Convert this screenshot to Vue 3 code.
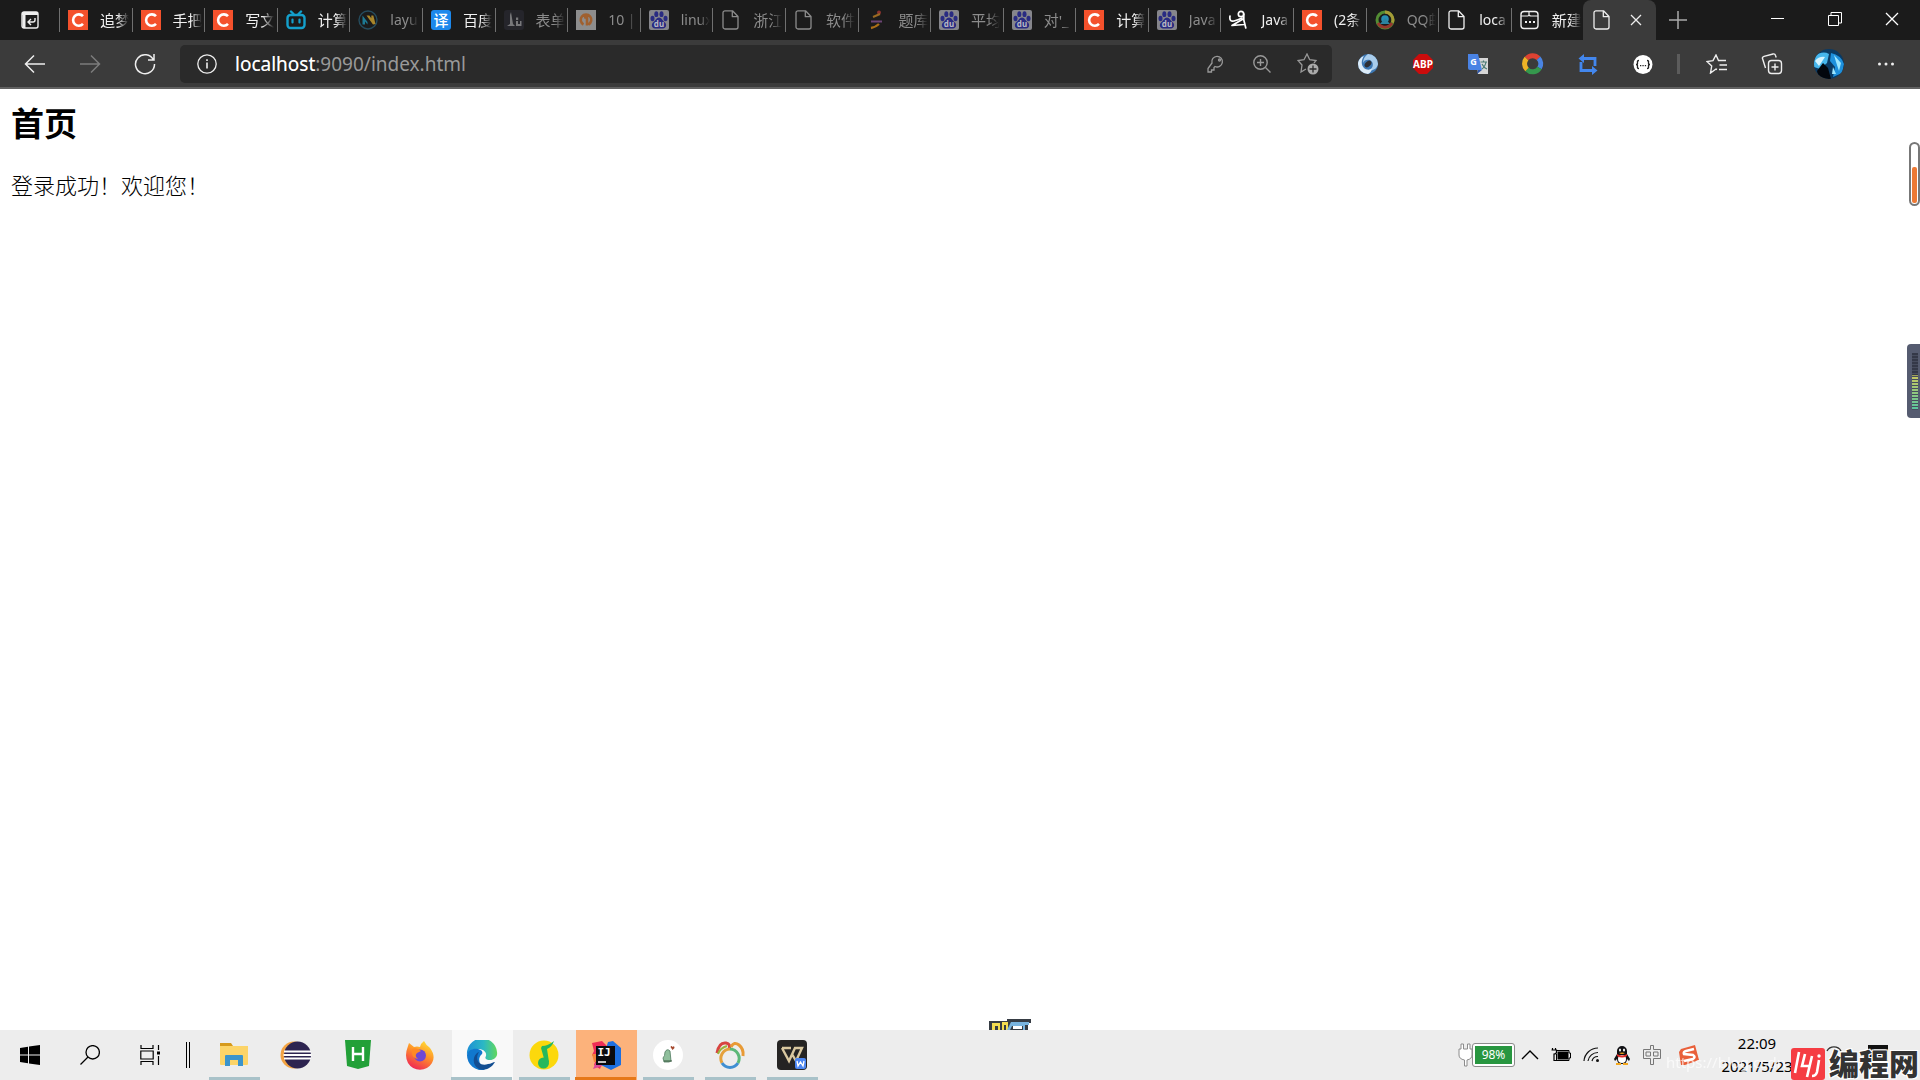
<script setup>
import { ref } from 'vue'

const art = {
  csdn: '<rect width="20" height="20" fill="#f4512c"/><path d="M15 6.2A5.7 5.7 0 1 0 15 13.9" fill="none" stroke="#fff" stroke-width="2.6"/>',
  bili: '<g fill="none" stroke="#14a0cc" stroke-width="2.4" stroke-linecap="round"><rect x="1.5" y="5" width="17" height="13" rx="3"/><path d="M5 1.5 7.5 4M15 1.5 12.5 4"/></g><path d="M6.5 9.500v3M13.500 9.500v3" stroke="#14a0cc" stroke-width="2.200" stroke-linecap="round"/>',
  layui: '<circle cx="10" cy="10" r="9" fill="none" stroke="#254c5e" stroke-width="1.400"/><path d="M4.500 14.500v-9l5 6.500v2.500L7 11.500v3z" fill="#1d7a94"/><path d="M8.500 5.500h2.800l2 2.800V5.500h2l2.200 8.500-2.500.500z" fill="#a8862a"/>',
  yi: '<rect width="20" height="20" rx="3" fill="#1c88ec"/><text x="10" y="15.500" text-anchor="middle" font-size="15" fill="#fff" font-weight="500" font-family="Noto Sans CJK SC, sans-serif">译</text>',
  li: '<rect width="20" height="20" rx="3" fill="#25252b"/><path d="M3 16l3-2V5l1-3 2 12 2 2zM12 7.500h2.200V10H12zM12 11h2v3h2v-3h1.500v5H12z" fill="#77777a"/>',
  ten: '<rect width="20" height="20" fill="#8d8d8d"/><path d="M7.500 14.500A5.300 5.300 0 1 1 12.500 14.500M8 7.500l3-1v9" fill="none" stroke="#a0602f" stroke-width="2.600"/>',
  baidu: '<rect width="20" height="20" rx="2" fill="#86868c"/><g fill="#292b82"><ellipse cx="3.500" cy="8.500" rx="2" ry="2.800"/><ellipse cx="7.300" cy="4.200" rx="2" ry="2.900"/><ellipse cx="12.500" cy="4.200" rx="2" ry="2.900"/><ellipse cx="16.500" cy="8.500" rx="2" ry="2.800"/><path d="M10 7.500c2.500 0 3.500 3 5.500 4.500 3 2.500 1.500 6.500-1.500 6.500H6c-3 0-4.500-4-1.500-6.500C6.500 10.500 7.500 7.500 10 7.500z"/></g><text x="10" y="17" text-anchor="middle" font-size="8" font-weight="700" fill="#b8b8c4" font-family="Noto Sans, sans-serif">du</text>',
  page: '<path d="M4 .800h7.500L17 6.500V17a2 2 0 0 1-2 2H4a2 2 0 0 1-2-2V2.800a2 2 0 0 1 2-2zM11.300 1v5.700H17" fill="none" stroke="currentColor" stroke-width="1.300" stroke-linejoin="round"/>',
  newpage: '<rect x="1" y="1.500" width="17" height="17" rx="3" fill="none" stroke="currentColor" stroke-width="1.400"/><path d="M1 6h7l1.500-2M9 1.500V4q0 2 2 2h7" fill="none" stroke="currentColor" stroke-width="1.200"/><path d="M5 11h2v2H5zM9 11h2v2H9zM13 11h2v2h-2z" fill="currentColor"/>',
  tiku: '<circle cx="12" cy="2.500" r="2" fill="#8b332f"/><path d="M6 7l7-3" stroke="#9b6a22" stroke-width="2"/><path d="M4 11.500h11" stroke="#6c4575" stroke-width="2"/><path d="M4 18q5-1 8-4" fill="none" stroke="#ab6e16" stroke-width="2.400"/>',
  niu: '<g fill="none" stroke="#fff" stroke-width="1.700" stroke-linecap="round" stroke-linejoin="round"><path d="M1 6q-1 6 4 5 4-1 8-3"/><circle cx="12" cy="4" r="2.700"/><path d="M14.800 4v6l2 8M14 9 3 15.500l12-1"/></g>',
  qqmail: '<circle cx="10" cy="10" r="8" fill="none" stroke="#538d34" stroke-width="3"/><path d="M10 2a8 8 0 0 1 7.500 10.500" fill="none" stroke="#a59b36" stroke-width="3"/><path d="M17 13a8 8 0 0 1-14 0" fill="none" stroke="#96382d" stroke-width="3"/><circle cx="10" cy="9" r="3.800" fill="#278eb1"/><path d="M5 14l5-6 5 6z" fill="#2d83a0"/>'
}

const tabs = [
  { t: '追梦', i: 'csdn', on: 1 }, { t: '手把', i: 'csdn', on: 1 }, { t: '写文', i: 'csdn', on: 1 },
  { t: '计算', i: 'bili', on: 1 }, { t: 'layu', i: 'layui', latin: 1 }, { t: '百度', i: 'yi', on: 1 },
  { t: '表单', i: 'li' }, { t: '10 |', i: 'ten', latin: 1 }, { t: 'linux', i: 'baidu', latin: 1 }, { t: '浙江', i: 'page' },
  { t: '软件', i: 'page' }, { t: '题库', i: 'tiku' }, { t: '平均', i: 'baidu' }, { t: "对'_", i: 'baidu' },
  { t: '计算', i: 'csdn', on: 1 }, { t: 'Java', i: 'baidu', latin: 1 }, { t: 'Java', i: 'niu', on: 1, latin: 1 },
  { t: '(2条', i: 'csdn', on: 1, latin: 1 }, { t: 'QQ邮', i: 'qqmail', latin: 1 }, { t: 'loca', i: 'page', on: 1, latin: 1 },
  { t: '新建', i: 'newpage', on: 1 }
]

const extensions = [
  { n: 'Swirl', s: '<circle cx="12" cy="12" r="10" fill="#3d78b4"/><path d="M12 2a10 10 0 0 1 10 10c-1 5-5 7-9 6 5-2 5-8 1-10-3-1-6 0-7 3 0-4 2-7 5-9z" fill="#a9cdec"/><path d="M12 22A10 10 0 0 1 2 12c0-4 3-7 6-8-3 4-3 9 0 12 2 2 5 2 8 1-1 3-2 4-4 5z" fill="#dcecf9"/><ellipse cx="12" cy="12" rx="4" ry="2.600" transform="rotate(-45 12 12)" fill="#2d2f35"/>' },
  { n: 'ABP', s: '<path d="M8 2h8l6 6v8l-6 6H8l-6-6V8z" fill="#cc0c0c"/><text x="12" y="16" text-anchor="middle" font-size="10" font-weight="700" fill="#fff" font-family="Noto Sans, sans-serif">ABP</text>' },
  { n: 'Translate', s: '<path d="M10 6h12v16H12z" fill="#d6d6d6"/><path d="M2 2h10l4 16H4a2 2 0 0 1-2-2z" fill="#4a83e4"/><path d="M12 18l-1 4 5-4z" fill="#2d55a8"/><text x="7.500" y="13" text-anchor="middle" font-size="9" font-weight="700" fill="#fff" font-family="Noto Sans, sans-serif">G</text><path d="M14.500 10H21M17.500 8.500V10M20 10q-1 5-4 7M16 12q2 4 5 5" fill="none" stroke="#4a7a73" stroke-width="1.200"/>' },
  { n: 'Ring', s: '<g fill="none" stroke-width="5"><path d="M5.500 6.500A8 8 0 0 1 17.500 6.200" stroke="#dc4232"/><path d="M17.500 6.200A8 8 0 0 1 18.500 16" stroke="#4a84e2"/><path d="M18.500 16A8 8 0 0 1 6 17.500" stroke="#35984d"/><path d="M6 17.500A8 8 0 0 1 5.500 6.500" stroke="#edb326"/></g>' },
  { n: 'Loop', s: '<path d="M19 14V6.500H7M5 10v8.500h12" fill="none" stroke="#4387ee" stroke-width="2.800"/><path d="M8 2v9L2.500 6.500zM16 14v9l5.500-4.500z" fill="#4387ee"/>' },
  { n: 'JSON', s: '<circle cx="12" cy="12.500" r="9.500" fill="#fff"/><path d="M8 8.500q-2 0-1.500 2 .300 2-1.500 2 1.800 0 1.500 2-.500 2 1.500 2M16 8.500q2 0 1.500 2-.300 2 1.500 2-1.800 0-1.500 2 .500 2-1.500 2" fill="none" stroke="#222" stroke-width="1.300"/><path d="M9 13h1.300v1.300H9zM11.400 13h1.300v1.300h-1.300zM13.800 13h1.300v1.300h-1.300z" fill="#222"/>' }
]

const apps = [
  { n: 'Explorer', run: 1, s: '<path d="M2 3h11l2 3H2z" fill="#d69a1c"/><path d="M2 6h28v18a1 1 0 0 1-1 1H3a1 1 0 0 1-1-1z" fill="#fcd468"/><path d="M7 26V16a1 1 0 0 1 1-1h16a1 1 0 0 1 1 1v10h-5v-6h-8v6z" fill="#3b94cc"/>' },
  { n: 'Eclipse', s: '<circle cx="14" cy="15" r="13.500" fill="#f2a343"/><circle cx="17.500" cy="15" r="13.500" fill="#2d2450"/><path d="M4 11.500h27M3.500 15h28M4 18.500h27" stroke="#fff" stroke-width="1.800"/>' },
  { n: 'HBuilder', s: '<path d="M3 0h26l-2 26-11 3-11-3z" fill="#22a038"/><path d="M11 7v14M21 7v14M11 14h10" stroke="#fff" stroke-width="2.400"/>' },
  { n: 'Firefox', s: '<defs><linearGradient id="ff" x1=".800" y1="0" x2=".300" y2="1"><stop offset="0" stop-color="#ffe338"/><stop offset=".450" stop-color="#ff9328"/><stop offset="1" stop-color="#ef2457"/></linearGradient></defs><path d="M4 6l1-3 5 4q3-1 6 0 1-4 4-6 2 4 5 6l1 1q6 8 2 15a14 14 0 0 1-24 0Q0 16 4 6z" fill="url(#ff)"/><circle cx="16" cy="15.500" r="6" fill="#7048d4"/><path d="M8 9q5-2 9 2l-4 2q-3 3 1 6-6-1-6-6z" fill="#ff8a25"/>' },
  { n: 'Edge', run: 1, active: 1, s: '<defs><linearGradient id="eg" x1="0" x2="1"><stop offset="0" stop-color="#1d8fd6"/><stop offset=".550" stop-color="#2bb8c4"/><stop offset="1" stop-color="#62d85c"/></linearGradient></defs><path d="M1 15A15 15 0 0 1 31 12c1 5-3 8-7 8-3 0-6-1-4-4 1-5-4-7-8-7-6 0-10 3-11 6z" fill="url(#eg)"/><path d="M1 15c1-5 6-7 11-6 4 1 5 3 4 5-5 4-3 11 3 16A15 15 0 0 1 1 15z" fill="#1178ce"/><path d="M13 12c-5 8 1 15 9 12 3 0 5-2 7-2-4 7-11 9-16 7-8-4-6-15 0-17z" fill="#124d91"/>' },
  { n: 'QQ Music', run: 1, s: '<circle cx="16" cy="15" r="14.500" fill="#fcd80c"/><path d="M14 6q6 0 12-5-2 6-7 8l2 13h-4L13 8z" fill="#27b85d"/><circle cx="15.500" cy="23" r="5.500" fill="#27b85d"/>' },
  { n: 'IntelliJ IDEA', run: 1, alert: 1, s: '<path d="M2 3l10-2 6 6-8 22-6-4 2-6-4-4 2-4z" fill="#ee2d57"/><path d="M2 14h7v8H4z" fill="#f5823a"/><path d="M18 2l5-1 8 7v17l-10 5-10-5z" fill="#1d6fe0"/><path d="M3 29l3-7h6v4z" fill="#dc4a9b"/><path d="M6 6h19v19H6z" fill="#0b0b0e"/><path d="M8 22h8" stroke="#fff" stroke-width="1.500"/><text x="14" y="16" text-anchor="middle" font-size="11" font-weight="700" fill="#fff" font-family="DejaVu Sans Mono, monospace">IJ</text>' },
  { n: 'Pet', run: 1, s: '<circle cx="16" cy="15" r="15" fill="#fff"/><path d="M13 12q2-4 5-1l1 10-2 1h-5l-1-4q2-2 2-6z" fill="#8fbf9c" stroke="#4f7a5e" stroke-width=".800"/><path d="M12 21h8" stroke="#39563f"/><path d="M20.500 10l-2-3q1-2 2 0 2-2 2 1z" fill="#a5482d"/>' },
  { n: 'Navicat', run: 1, s: '<g fill="none" stroke-width="3"><path d="M3 13Q5 2 12 3q5 1 3 6" stroke="#d84440"/><path d="M17 7q3-6 8-2 5 4 4 11" stroke="#e89a35"/><path d="M16 9A9.500 9.500 0 0 0 8 23" stroke="#e5a13c"/><path d="M8 23a9.500 9.500 0 0 0 16 0" stroke="#408fd2"/><path d="M16 9a9.500 9.500 0 0 1 8 14" stroke="#5cb878"/><path d="M4 14q2-6 9-8" stroke="#9bb43c" stroke-width="2"/></g>' },
  { n: 'WPS', run: 1, s: '<rect x="1" width="30" height="30" rx="4" fill="#252423"/><path d="M6 8h9M6 8l7 13 6-13h7l-6 13-4-7" fill="none" stroke="#d9c8a0" stroke-width="2.400"/><rect x="19" y="18" width="11" height="11" rx="2" fill="#4b86f2"/><path d="M21 21l1 5 2.500-4 2.500 4 1-5" fill="none" stroke="#fff" stroke-width="1.300"/>' }
]

const address = ref('localhost:9090/index.html')
</script>

<template>
  <div class="screen">
    <header>
      <div class="strip">
        <button class="tabmenu" aria-label="Tab actions">
          <svg width="18" height="18" viewBox="0 0 18 18" fill="none" stroke="#eee" stroke-width="1.400"><rect x="1" y="1" width="16" height="16" rx="2" /><path d="M1 2.500h16" stroke-width="3" /><path d="M3 3v14" stroke-width="3" /><path d="M14 7v2q0 2-2 2H7.500M10 8l-3 3 3 3" /></svg>
        </button>
        <nav class="tabs">
          <button v-for="(tab, k) in tabs" :key="k" class="tab" :class="{ awake: tab.on }">
            <svg class="favicon" width="20" height="20" viewBox="0 0 20 20" v-html="art[tab.i]"></svg>
            <span class="title" :class="{ latin: tab.latin }">{{ tab.t }}</span>
          </button>
          <div class="tab current">
            <svg class="favicon" width="20" height="20" viewBox="0 0 20 20" v-html="art.page"></svg>
            <button class="close" aria-label="Close tab"><svg width="12" height="12" viewBox="0 0 12 12"><path d="M1 1l10 10M11 1 1 11" stroke="#eee" stroke-width="1.300" /></svg></button>
          </div>
        </nav>
        <button class="add" aria-label="New tab"><svg width="18" height="18" viewBox="0 0 18 18"><path d="M9 0v18M0 9h18" stroke="#aaa" stroke-width="1.500" /></svg></button>
        <div class="window">
          <button aria-label="Minimize"><svg width="14" height="14" viewBox="0 0 14 14"><path d="M0 6.500h13" stroke="#fff" /></svg></button>
          <button aria-label="Restore"><svg width="14" height="14" viewBox="0 0 14 14" fill="none" stroke="#fff"><path d="M.500 3.500h10v10H.500zM3 3V.500h10.500V11H11" /></svg></button>
          <button aria-label="Close"><svg width="14" height="14" viewBox="0 0 14 14"><path d="M1 1l12 12M13 1 1 13" stroke="#fff" stroke-width="1.300" /></svg></button>
        </div>
      </div>

      <div class="toolbar">
        <div class="history">
          <button aria-label="Back"><svg width="22" height="20" viewBox="0 0 22 20" fill="none" stroke="#eee" stroke-width="1.500"><path d="M21 10H2M10 1.500 1.500 10l8.500 8.500" /></svg></button>
          <button aria-label="Forward"><svg width="22" height="20" viewBox="0 0 22 20" fill="none" stroke="#7c7c7c" stroke-width="1.500"><path d="M1 10h19M12 1.500l8.500 8.500-8.500 8.500" /></svg></button>
          <button aria-label="Reload"><svg width="22" height="22" viewBox="0 0 22 22" fill="none" stroke="#eee" stroke-width="1.500"><path d="M19.500 7A9.500 9.500 0 1 0 20.500 11M20 1v6h-6" /></svg></button>
        </div>
        <div class="address">
          <svg width="20" height="20" viewBox="0 0 20 20" fill="none" stroke="#eee" stroke-width="1.300"><circle cx="10" cy="10" r="9.200" /><path d="M10 8.500V14.500M10 5.300v1.700" stroke-width="1.600" /></svg>
          <div class="url">
            <input v-model="address" type="text" aria-label="Address" />
            <span class="host" aria-hidden="true">localhost</span>
          </div>
          <button aria-label="Passwords"><svg width="18" height="18" viewBox="0 0 18 18" fill="none" stroke="#999" stroke-width="1.300"><path d="M8 11.500a5.300 5.300 0 1 0-3-3.500L1 13.500V17h3.500v-2H7v-2.500z" /><circle cx="12.500" cy="5" r="1" /></svg></button>
          <button aria-label="Zoom"><svg width="18" height="18" viewBox="0 0 18 18" fill="none" stroke="#999" stroke-width="1.400"><circle cx="7.500" cy="7.500" r="6.700" /><path d="M12.500 12.500l5 5M7.500 4v7M4 7.500h7" /></svg></button>
          <button aria-label="Add favourite"><svg width="22" height="22" viewBox="0 0 22 22" fill="none" stroke="#999" stroke-width="1.300"><path d="M9 16l-5 3 1-7-4-4.500 6-.800L10 1l2.700 5.700 6.300.800-2 2.500" /><circle cx="16" cy="16" r="5.500" fill="#aaa" stroke="none" /><path d="M16 12.500v7M12.500 16h7" stroke="#2b2b2b" /></svg></button>
        </div>
        <div class="tools">
          <button v-for="e in extensions" :key="e.n" :aria-label="e.n"><svg width="24" height="24" viewBox="0 0 24 24" v-html="e.s"></svg></button>
          <i class="divider"></i>
          <button aria-label="Favourites"><svg width="22" height="20" viewBox="0 0 22 20" fill="none" stroke="#eee" stroke-width="1.400"><path d="M11 15.500l-1-.500-5.500 4 1.200-7L1 7.500l6-.800L10 1l2.500 5.500H20M13.500 11H21M13 15.500h8" /></svg></button>
          <button aria-label="Collections"><svg width="22" height="22" viewBox="0 0 22 22" fill="none" stroke="#eee" stroke-width="1.400"><path d="M4.500 15 1.500 5.500Q1 4 3 3.300L12 1q2-.500 2.500 1.500l.700 2" /><rect x="7.500" y="7.500" width="13" height="13" rx="3" /><path d="M14 10.500v7M10.500 14h7" /></svg></button>
          <button class="profile" aria-label="Profile"><svg width="30" height="30" viewBox="0 0 30 30"><defs><clipPath id="av"><circle cx="15" cy="15" r="15" /></clipPath></defs><g clip-path="url(#av)"><path d="M0 0h30v30H0z" fill="#0b3a63" /><path d="M0 8q8-7 15-3l-2 9-7 6-6-2z" fill="#46b6ec" /><path d="M1 12q4-5 10-4l-6 9z" fill="#d4f3ff" /><path d="M17 4q10 2 13 11l-2 9-9 4 2-10-5-6z" fill="#1e90dc" /><path d="M20 6l7 8-2 8-3-9zM18 25l1-7 3 7z" fill="#9be6ff" /><path d="M3 22l6-8 5 5 3 11H5z" fill="#02060d" /></g></svg></button>
          <button aria-label="More"><svg width="18" height="4" viewBox="0 0 18 4" fill="#eee"><circle cx="2.500" cy="2" r="1.500" /><circle cx="9" cy="2" r="1.500" /><circle cx="15.500" cy="2" r="1.500" /></svg></button>
        </div>
      </div>
    </header>

    <main>
      <h2>首页</h2>
      <p>登录成功！欢迎您！</p>
      <div class="gauge"><i></i></div>
      <div class="meter"><i></i></div>
      <svg class="pet" width="44" height="11" viewBox="0 0 44 11"><path d="M1 11V2h18V0h24v4h-3v7z" fill="#363c44" /><path d="M4 11V4h8v7h-2V7H7v4zM14 11V3h6v8h-2V6h-2v5z" fill="#f3dc50" /><path d="M23 3h18v3h-4v5h-2V7H24l-2 4h-3z" fill="#79b4df" /><path d="M25 7h9v3h-9z" fill="#fff" /></svg>
    </main>

    <footer>
      <div class="start">
        <button aria-label="Start"><svg width="20" height="20" viewBox="0 0 20 20"><path d="M0 3l8-1.200V9.500H0zM9 1.600 20 0v9.500H9zM0 10.500h8v7.700L0 17zM9 10.500h11V20L9 18.400z" /></svg></button>
        <button aria-label="Search"><svg width="20" height="20" viewBox="0 0 20 20" fill="none" stroke="#000" stroke-width="1.300"><circle cx="12.700" cy="7.300" r="6.700" /><path d="M8 12 .500 19.500" /></svg></button>
        <button aria-label="Task view"><svg width="20" height="20" viewBox="0 0 20 20" fill="none" stroke="#000" stroke-width="1.200"><path d="M1 0v3.500h12V0M1 20v-3.500h12V20M.800 6h12.400v8H.800zM18.500 0v5M18.500 11v9" /><path d="M17 6.500h3v3h-3z" fill="#000" stroke="none" /></svg></button>
        <i class="bars"></i>
      </div>
      <div class="apps">
        <button v-for="a in apps" :key="a.n" :aria-label="a.n" :class="{ run: a.run, active: a.active, alert: a.alert }"><svg width="32" height="30" viewBox="0 0 32 30" v-html="a.s"></svg></button>
      </div>
      <div class="tray">
        <div class="power">
          <svg width="15" height="24" viewBox="0 0 15 24" fill="#fff" stroke="#8c8c8c"><path d="M3 6V1h2.500v5h4V1H12v5h2v6q0 4-5 5v6H6.500v-6Q1 16 1 12V6z" /></svg>
          <span>98%</span>
        </div>
        <svg width="18" height="10" viewBox="0 0 18 10" fill="none" stroke="#000" stroke-width="1.400"><path d="M1 9l8-8 8 8" /></svg>
        <svg width="20" height="14" viewBox="0 0 20 14"><path d="M1.500 0v2M4.500 0v2M.500 2h5v2q0 2-2.500 2v6.500h3" fill="none" stroke="#000" stroke-width="1.200" /><path d="M6.500 3.500h11v8h-11z" fill="#000" /><path d="M6 2.500h12V5h1.500v5H18v2.500H5.500V6" fill="none" stroke="#000" /></svg>
        <svg width="18" height="16" viewBox="0 0 18 16" fill="none" stroke="#111" stroke-width="1.200"><path d="M1 14A14 14 0 0 1 15 1M5 14A10 10 0 0 1 15 5.500M9 14a6 6 0 0 1 6-4.500" /><circle cx="14.500" cy="13.500" r="1.500" fill="#111" stroke="none" /></svg>
        <svg width="18" height="20" viewBox="0 0 18 20"><path d="M4 9V6a5 5 0 0 1 10 0v3l3 5-1 2-2-2q0 5-5 5t-5-5l-2 2-1-2z" fill="#101014" /><ellipse cx="9" cy="14" rx="4" ry="4" fill="#fff" /><path d="M4 9q5 3 10 0v2q-5 3-10 0z" fill="#e32a26" /><ellipse cx="7" cy="5" rx="1" ry="1.600" fill="#fff" /><ellipse cx="11" cy="5" rx="1" ry="1.600" fill="#fff" /><path d="M6 8q3-1 6 0-3 2-6 0zM3 18h5v2H3zM10 18h5v2h-5z" fill="#f4a81d" /></svg>
        <svg width="18" height="20" viewBox="0 0 18 20" fill="none" stroke="#777"><path d="M7.500.500h3v4h7v9h-7v6h-3v-6h-7v-9h7z" /><path d="M3 7h4.500v4H3zM10.500 7H15v4h-4.500z" /></svg>
        <svg class="sogou" width="20" height="20" viewBox="0 0 20 20"><path d="M2 4l14-4 4 15-14 5H2L0 7z" fill="#e9603a" /><path d="M15 4 7 6Q4 7 5 9l9 1q3 2 0 4l-9 2" fill="none" stroke="#fff" stroke-width="2.600" /></svg>
        <div class="clock"><time>22:09</time><time>2021/5/23</time></div>
        <svg class="notice" width="64" height="20" viewBox="0 0 64 20"><path d="M2 6a8 8 0 0 1 14 0" fill="none" stroke="#333" stroke-width="1.400" /><path d="M43 0h20v16h-4l-4 4v-4H43z" fill="#111" /></svg>
      </div>
      <span class="link">https://blog.csdn</span>
      <div class="brand">
        <svg width="34" height="32" viewBox="0 0 34 32"><rect width="34" height="32" rx="3" fill="#f53d43" /><path d="M8 4 4 25M14 6l-3 12h8M21 8l-5 21M28 12l-2 12q-1 4-5 4" fill="none" stroke="#fff" stroke-width="2.600" /><circle cx="28" cy="8" r="1.700" fill="#fff" /></svg>
        <strong>编程网</strong>
      </div>
    </footer>
  </div>
</template>

<style>
body {
  margin: 0;
  background: #fff;
}
</style>

<style scoped>
.screen {
  display: flex;
  flex-direction: column;
  min-height: 100vh;
  overflow: hidden;
  font-family: "Noto Sans", "Noto Sans CJK SC", sans-serif;
}
button {
  display: flex;
  align-items: center;
  justify-content: center;
  padding: 0;
  border: 0;
  background: none;
  color: inherit;
  font: inherit;
}
svg {
  flex: none;
  display: block;
}
.strip {
  display: flex;
  height: 40px;
  background: #1b1b1b;
}
.tabmenu {
  width: 59px;
}
.tabs {
  flex: 1;
  display: grid;
  grid-template-columns: repeat(22, minmax(0, 1fr));
}
.tab {
  position: relative;
  display: flex;
  justify-content: flex-start;
  align-items: center;
  gap: 12px;
  padding-left: 9px;
  color: #8c8c8c;
  font-size: 15px;
  overflow: hidden;
}
.tab::before {
  content: "";
  position: absolute;
  left: 0;
  top: 8px;
  width: 1px;
  height: 24px;
  background: #707070;
}
.awake {
  color: #f0f0f0;
}
.title {
  width: 29px;
  line-height: 20px;
  overflow: hidden;
  white-space: nowrap;
  text-align: left;
  mask-image: linear-gradient(to right, #000 60%, transparent);
}
.latin {
  font-size: 14px;
}
.current {
  gap: 18px;
  border-radius: 8px 8px 0 0;
  background: #3b3b3b;
  color: #eee;
}
.current::before {
  display: none;
}
.add {
  width: 44px;
}
.window {
  display: flex;
  justify-content: flex-end;
  width: 220px;
}
.window button {
  width: 57px;
  height: 37px;
}
.toolbar {
  display: flex;
  align-items: center;
  height: 47px;
  background: #3b3b3b;
  border-bottom: 2px solid #616161;
}
.history {
  display: flex;
  width: 180px;
  padding-left: 7px;
  box-sizing: border-box;
}
.history button {
  width: 55px;
}
.address {
  flex: 1;
  display: flex;
  align-items: center;
  height: 38px;
  padding: 0 1px 0 17px;
  border-radius: 5px;
  background: #2a2a2a;
}
.address button {
  width: 46px;
}
.url {
  position: relative;
  flex: 1;
  margin-left: 18px;
  font-size: 19px;
  line-height: 26px;
}
.url input {
  display: block;
  width: 100%;
  height: 26px;
  padding: 0;
  border: 0;
  outline: 0;
  background: none;
  color: #999;
  font: inherit;
}
.host {
  position: absolute;
  left: 0;
  top: 0;
  color: #fff;
  pointer-events: none;
}
.tools {
  display: flex;
  align-items: center;
  padding: 0 7px 0 8px;
}
.tools button {
  width: 55px;
}
.tools .profile {
  width: 59px;
}
.divider {
  width: 3px;
  height: 20px;
  margin: 0 9px 0 7px;
  background: #5c5c5c;
}
main {
  position: relative;
  flex: 1;
  padding: 9px 11px;
  color: #000;
  font-family: "Noto Sans CJK SC", sans-serif;
}
h2 {
  margin: 0 0 18px;
  font-size: 33px;
  line-height: 48px;
  font-weight: 700;
}
p {
  margin: 0;
  font-size: 22px;
  line-height: 40px;
  font-weight: 300;
}
.gauge {
  position: absolute;
  right: 0;
  top: 53px;
  display: flex;
  align-items: flex-end;
  width: 11px;
  height: 64px;
  padding: 1px;
  box-sizing: border-box;
  border: 2px solid #777;
  border-radius: 6px;
}
.gauge i {
  flex: 1;
  height: 36px;
  border-radius: 2px;
  background: #ed7934;
}
.meter {
  position: absolute;
  right: 0;
  top: 255px;
  width: 13px;
  height: 74px;
  box-sizing: border-box;
  padding: 9px 2px 8px 5px;
  border-radius: 4px 0 0 4px;
  background: #555b70;
}
.meter i {
  display: block;
  height: 100%;
  background: repeating-linear-gradient(transparent 0 2px, #474c5e 2px 3px), linear-gradient(#343848 0 38%, #c8c860 40%, #57c5a0);
}
.pet {
  position: absolute;
  left: 988px;
  bottom: 0;
}
footer {
  position: relative;
  display: flex;
  height: 50px;
  background: #ededed;
}
.start {
  display: flex;
  align-items: center;
  width: 203px;
}
.start button {
  width: 60px;
}
.bars {
  width: 2px;
  height: 26px;
  margin-left: 6px;
  border: solid #000;
  border-width: 0 1px;
}
.apps {
  flex: 1;
  display: flex;
}
.apps button {
  position: relative;
  width: 62px;
}
.run::after {
  content: "";
  position: absolute;
  left: 6px;
  right: 5px;
  bottom: 0;
  height: 3px;
  background: #a9c2c9;
}
.apps .active {
  background: linear-gradient(#f9f9f9, #f9f9f9) center / 61px 100% no-repeat;
}
.apps .alert {
  background: linear-gradient(#fcb27b, #fcb27b) center / 61px 100% no-repeat;
}
.active::after,
.alert::after {
  left: 0;
  right: 1px;
}
.alert::after {
  background: #e67818;
}
.tray {
  display: flex;
  align-items: center;
  gap: 12px;
  padding-right: 31px;
  color: #000;
}
.power {
  display: flex;
  align-items: center;
  margin-right: -5px;
}
.power span {
  width: 37px;
  border: 2px solid #fff;
  outline: 1px solid #8c8c8c;
  border-radius: 2px;
  background: #289640;
  color: #fff;
  font-size: 12px;
  line-height: 18px;
  text-align: center;
}
.sogou {
  margin-left: 6px;
}
.clock {
  display: flex;
  flex-direction: column;
  width: 76px;
  margin-left: 8px;
  font-size: 15px;
  line-height: 23px;
  text-align: center;
  white-space: nowrap;
}
.notice {
  margin-left: 18px;
}
.link {
  position: absolute;
  right: 134px;
  bottom: 7px;
  color: #fff;
  opacity: 0.7;
  font-size: 15px;
  line-height: 22px;
}
.brand {
  position: absolute;
  right: 1px;
  bottom: 0;
  display: flex;
  align-items: center;
  gap: 4px;
}
.brand strong {
  padding-bottom: 4px;
  color: #333;
  font-family: "Noto Sans CJK SC", sans-serif;
  font-size: 30px;
  line-height: 28px;
  font-weight: 900;
  text-shadow: 1px 1px #fff, -1px -1px #fff, 1px -1px #fff, -1px 1px #fff;
}
</style>
